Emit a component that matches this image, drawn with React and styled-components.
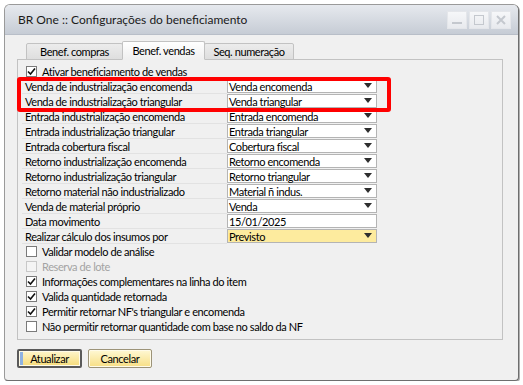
import styled, { createGlobalStyle } from "styled-components";

const GlobalStyle = createGlobalStyle`
	body {
		margin: 0;
		background: #ffffff;
		font-family: Lato, "Liberation Sans", Arial, sans-serif;
		font-size: 11px;
		letter-spacing: -0.4px;
		color: #000;
	}
`;

const Window = styled.div`
	position: relative;
	margin: 4px 0 0 4px;
	width: 513px;
	height: 375px;
	border: 1px solid #9a9a9a;
	border-right-color: #6e6e6e;
	border-bottom-color: #6e6e6e;
	border-radius: 6px 6px 4px 4px;
	box-shadow: 1px 1px 0 #b0b0b0;
	background: #f0f0f0;
	display: flex;
	flex-direction: column;
	overflow: hidden;
`;

const TitleBar = styled.div`
	height: 29px;
	flex-shrink: 0;
	display: flex;
	align-items: center;
	justify-content: space-between;
	padding: 0 7px 0 13px;
	background: linear-gradient(#e6e9ee, #c6ccd5);
	border-bottom: 1px solid #b8bec8;
`;

const Title = styled.span`
	font-family: Lato, "Liberation Sans", sans-serif;
	font-size: 12px;
	letter-spacing: 0;
	color: #1a1a1a;
`;

const TitleButtons = styled.div`
	display: flex;
	gap: 2px;
`;

const TitleButton = styled.div`
	width: 20px;
	height: 18px;
	box-sizing: border-box;
	border: 1px solid #e4e6ea;
	background: linear-gradient(#f6f7f9, #e8eaee);
	display: flex;
	align-items: center;
	justify-content: center;
	svg {
		display: block;
	}
`;

const Body = styled.div`
	flex: 1;
	padding: 6px 16px 0 12px;
	display: flex;
	flex-direction: column;
`;

const TabRow = styled.div`
	display: flex;
	align-items: flex-end;
	padding-left: 9px;
	height: 19px;
	position: relative;
	z-index: 1;
	margin-bottom: -1px;
`;

const Tab = styled.div`
	box-sizing: border-box;
	width: ${(p) => p.$w}px;
	height: ${(p) => (p.$active ? 19 : 17)}px;
	display: flex;
	align-items: center;
	justify-content: center;
	border: 1px solid #c2c2c2;
	border-bottom: ${(p) => (p.$active ? "1px solid #f0f0f0" : "1px solid #c2c2c2")};
	border-radius: 2px 2px 0 0;
	background: ${(p) =>
		p.$active ? "linear-gradient(#ffffff, #f0f0f0)" : "linear-gradient(#ececec, #dedede)"};
	margin-left: ${(p) => (p.$active ? "-1px" : "0")};
	margin-right: ${(p) => (p.$active ? "-1px" : "0")};
	position: relative;
	z-index: ${(p) => (p.$active ? 2 : 1)};
`;

const Panel = styled.div`
	box-sizing: border-box;
	width: 486px;
	height: 281px;
	border: 1px solid #c2c2c2;
	padding: 4px 0 0 4px;
	display: flex;
	flex-direction: column;
`;

const CheckRow = styled.label`
	height: 15px;
	display: flex;
	align-items: center;
	gap: 5px;
	padding-left: 4px;
	color: ${(p) => (p.$disabled ? "#a3a3a3" : "#000")};
`;

const Box = styled.span`
	width: 11px;
	height: 11px;
	box-sizing: border-box;
	border: 1px solid ${(p) => (p.$disabled ? "#c8c8c8" : "#7a7a7a")};
	background: ${(p) => (p.$disabled ? "#f4f4f4" : "#fff")};
	display: flex;
	align-items: center;
	justify-content: center;
	flex-shrink: 0;
`;

const Highlight = styled.div`
	position: relative;
	&::after {
		content: "";
		position: absolute;
		top: -2px;
		left: -5px;
		right: 111px;
		bottom: -3px;
		border: 4px solid #ff0000;
		border-radius: 3px;
		pointer-events: none;
	}
`;

const FieldRow = styled.div`
	height: 15px;
	display: flex;
`;

const Label = styled.div`
	width: 205px;
	height: 15px;
	box-sizing: border-box;
	padding-left: 3px;
	border-bottom: 1px solid #e2e2e2;
	display: flex;
	align-items: center;
	white-space: nowrap;
`;

const Field = styled.div`
	width: 150px;
	height: 14px;
	box-sizing: border-box;
	border: 1px solid #b4b4b4;
	background: ${(p) => (p.$yellow ? "#fdeb9e" : "#ffffff")};
	padding-left: 1px;
	display: flex;
	align-items: center;
	justify-content: space-between;
	white-space: nowrap;
`;

const Arrow = styled.span`
	width: 0;
	height: 0;
	margin-right: 4px;
	margin-top: -2px;
	border-left: 4px solid transparent;
	border-right: 4px solid transparent;
	border-top: 5px solid #2e2e2e;
`;

const Buttons = styled.div`
	display: flex;
	gap: 6px;
	margin-top: 9px;
`;

const Button = styled.button`
	box-sizing: border-box;
	width: ${(p) => (p.$default ? 65 : 64)}px;
	height: 19px;
	padding: 0;
	font-family: Lato, "Liberation Sans", Arial, sans-serif;
	font-size: 11px;
	letter-spacing: -0.4px;
	color: #000;
	border-radius: 2px;
	border: ${(p) => (p.$default ? "2px solid #5a5a5a" : "1px solid #9c9378")};
	background: ${(p) =>
		p.$default
			? "linear-gradient(90deg, #8fb2e2 0, #8fb2e2 4px, transparent 4px), linear-gradient(#fff6cc, #f6dc7a)"
			: "linear-gradient(#fff8d4, #f7df84)"};
	box-shadow: inset 0 0 0 1px #fffbe8;
`;

const Check = () => (
	<svg width="9" height="9" viewBox="0 0 9 9">
		<path d="M1 4.5 L3.5 7 L8 1.5" fill="none" stroke="#111" strokeWidth="1.6" />
	</svg>
);

const rows = [
	["Entrada industrialização encomenda", "Entrada encomenda"],
	["Entrada industrialização triangular", "Entrada triangular"],
	["Entrada cobertura fiscal", "Cobertura fiscal"],
	["Retorno industrialização encomenda", "Retorno encomenda"],
	["Retorno industrialização triangular", "Retorno triangular"],
	["Retorno material não industrializado", "Material ñ indus."],
	["Venda de material próprio", "Venda"],
];

const checks = [
	["Validar modelo de análise", false, false],
	["Reserva de lote", false, true],
	["Informações complementares na linha do item", true, false],
	["Valida quantidade retornada", true, false],
	["Permitir retornar NF's triangular e encomenda", true, false],
	["Não permitir retornar quantidade com base no saldo da NF", false, false],
];

const Row = ({ label, value, arrow = true, yellow }) => (
	<FieldRow>
		<Label>{label}</Label>
		<Field $yellow={yellow}>
			<span>{value}</span>
			{arrow && <Arrow />}
		</Field>
	</FieldRow>
);

const App = () => {
	return (
		<>
			<GlobalStyle />
			<Window>
				<TitleBar>
					<Title>BR One :: Configurações do beneficiamento</Title>
					<TitleButtons>
						<TitleButton>
							<svg width="12" height="10" viewBox="0 0 12 10">
								<rect x="1" y="7" width="10" height="2" fill="#c4c8ce" />
							</svg>
						</TitleButton>
						<TitleButton>
							<svg width="12" height="10" viewBox="0 0 12 10">
								<rect x="1.5" y="0.5" width="9" height="9" fill="none" stroke="#c4c8ce" />
							</svg>
						</TitleButton>
						<TitleButton>
							<svg width="12" height="10" viewBox="0 0 12 10">
								<path d="M2 1 L10 9 M10 1 L2 9" stroke="#c4c8ce" strokeWidth="2" />
							</svg>
						</TitleButton>
					</TitleButtons>
				</TitleBar>
				<Body>
					<TabRow>
						<Tab $w={97}>Benef. compras</Tab>
						<Tab $w={83} $active>
							Benef. vendas
						</Tab>
						<Tab $w={90}>Seq. numeração</Tab>
					</TabRow>
					<Panel>
						<CheckRow>
							<Box>
								<Check />
							</Box>
							Ativar beneficiamento de vendas
						</CheckRow>
						<Highlight>
							<Row label="Venda de industrialização encomenda" value="Venda encomenda" />
							<Row label="Venda de industrialização triangular" value="Venda triangular" />
						</Highlight>
						{rows.map(([label, value]) => (
							<Row key={label} label={label} value={value} />
						))}
						<Row label="Data movimento" value="15/01/2025" arrow={false} />
						<Row label="Realizar cálculo dos insumos por" value="Previsto" yellow />
						{checks.map(([label, checked, disabled]) => (
							<CheckRow key={label} $disabled={disabled}>
								<Box $disabled={disabled}>{checked && <Check />}</Box>
								{label}
							</CheckRow>
						))}
					</Panel>
					<Buttons>
						<Button $default>Atualizar</Button>
						<Button>Cancelar</Button>
					</Buttons>
				</Body>
			</Window>
		</>
	);
};

export default App;
